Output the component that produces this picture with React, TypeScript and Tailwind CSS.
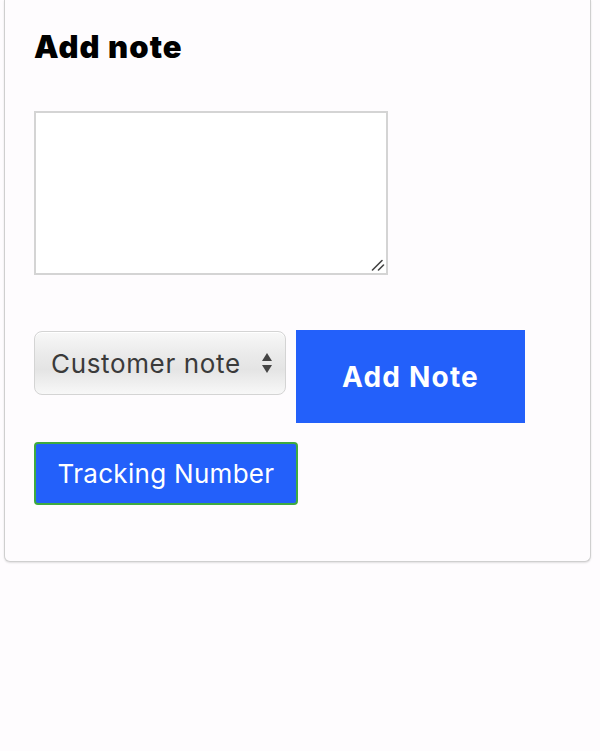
import React from "react";

export default function App() {
  return (
    <div className="min-h-[751px] w-[600px] bg-[#fefcfe] px-[4px] pr-[9px]" style={{ fontFamily: "Inter, 'Noto Sans', sans-serif" }}>
      <div className="rounded-b-[6px] border-x border-b border-[#cfcfcf] bg-[#fefcfe] pb-[56px] pl-[29px] pt-[28px] shadow-[0_1px_2px_rgba(0,0,0,0.12)]">
        <h2 className="text-[31px] font-black leading-[38px] tracking-[1.1px] text-black">Add note</h2>
        <div className="relative mt-[45px] h-[164px] w-[354px]">
          <textarea className="block h-full w-full resize-none border-2 border-[#d4d4d4] bg-white" />
          <svg className="pointer-events-none absolute bottom-[4px] right-[3px]" width="14" height="12" viewBox="0 0 14 12">
            <path d="M1.5 11 L11 1.5" stroke="#444" strokeWidth="1.6" strokeLinecap="round" />
            <path d="M7.5 11 L12.5 6" stroke="#444" strokeWidth="1.6" strokeLinecap="round" />
          </svg>
        </div>
        <div className="mt-[55px] flex items-start gap-[10px]">
          <div className="relative mt-[1px] flex h-[64px] w-[252px] items-center rounded-[8px] border border-[#d4d4d4] bg-[linear-gradient(to_bottom,#f8f8f8_0%,#ebebeb_35%,#e4e4e4_60%,#f8f8f8_100%)] pl-[16px] text-[26px] tracking-[0.65px] text-[#3a3a3a] shadow-[inset_0_1px_0_#fff]">
            <span>Customer note</span>
            <svg className="absolute right-[12px] top-[20px]" width="12" height="22" viewBox="0 0 12 22">
              <path d="M6 1 L11 9 L1 9 Z" fill="#444" />
              <path d="M6 21 L11 13 L1 13 Z" fill="#444" />
            </svg>
          </div>
          <button className="flex h-[93px] w-[229px] items-center justify-center bg-[#2360fa] text-[28px] font-bold tracking-[1.2px] text-white">
            Add Note
          </button>
        </div>
        <button className="mt-[19px] flex h-[63px] w-[264px] items-center justify-center rounded-[4px] border-2 border-[#3faa3f] bg-[#2360fa] text-[26px] tracking-[0.3px] text-white">
          Tracking Number
        </button>
      </div>
    </div>
  );
}
